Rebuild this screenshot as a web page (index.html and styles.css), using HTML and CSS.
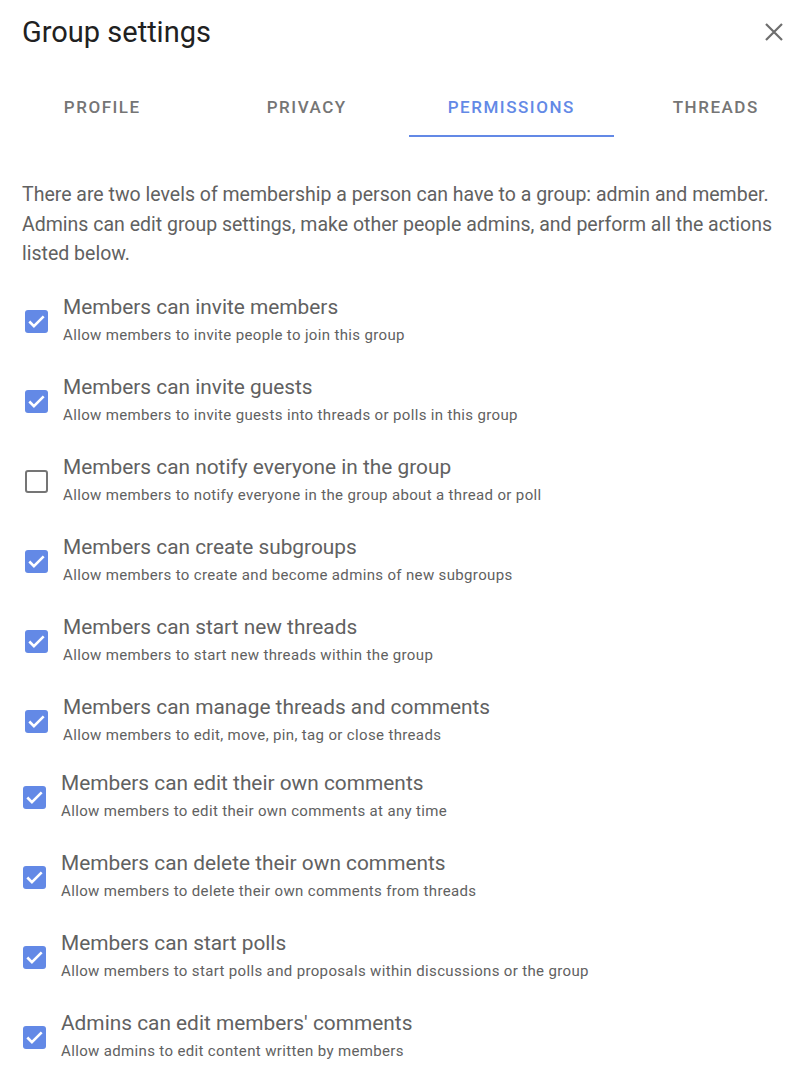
FILE: index.html
```html
<!DOCTYPE html>
<html>
<head>
<meta charset="utf-8">
<link rel="stylesheet" href="styles.css">
</head>
<body>
<div class="dialog">
  <header class="header">
    <h1 class="title">Group settings</h1>
    <button class="close" aria-label="Close">
      <svg viewBox="0 0 18 18" width="18" height="18"><path d="M1 1L17 17M17 1L1 17" stroke="#6e6e6e" stroke-width="2.2" fill="none"/></svg>
    </button>
  </header>
  <nav class="tabs">
    <div class="tab">Profile</div>
    <div class="tab">Privacy</div>
    <div class="tab active">Permissions</div>
    <div class="tab">Threads</div>
  </nav>
  <p class="intro">There are two levels of membership a person can have to a group: admin and member. Admins can edit group settings, make other people admins, and perform all the actions listed below.</p>
  <div class="list">
    <div class="row"><span class="box checked"><svg viewBox="0 0 24 24"><path d="M4.5 12L9.3 16.8L19.5 6.6" stroke="#fff" stroke-width="2.7" fill="none"/></svg></span><div class="text"><div class="label">Members can invite members</div><div class="hint">Allow members to invite people to join this group</div></div></div>
    <div class="row"><span class="box checked"><svg viewBox="0 0 24 24"><path d="M4.5 12L9.3 16.8L19.5 6.6" stroke="#fff" stroke-width="2.7" fill="none"/></svg></span><div class="text"><div class="label">Members can invite guests</div><div class="hint">Allow members to invite guests into threads or polls in this group</div></div></div>
    <div class="row"><span class="box"></span><div class="text"><div class="label">Members can notify everyone in the group</div><div class="hint">Allow members to notify everyone in the group about a thread or poll</div></div></div>
    <div class="row"><span class="box checked"><svg viewBox="0 0 24 24"><path d="M4.5 12L9.3 16.8L19.5 6.6" stroke="#fff" stroke-width="2.7" fill="none"/></svg></span><div class="text"><div class="label">Members can create subgroups</div><div class="hint">Allow members to create and become admins of new subgroups</div></div></div>
    <div class="row"><span class="box checked"><svg viewBox="0 0 24 24"><path d="M4.5 12L9.3 16.8L19.5 6.6" stroke="#fff" stroke-width="2.7" fill="none"/></svg></span><div class="text"><div class="label">Members can start new threads</div><div class="hint">Allow members to start new threads within the group</div></div></div>
    <div class="row"><span class="box checked"><svg viewBox="0 0 24 24"><path d="M4.5 12L9.3 16.8L19.5 6.6" stroke="#fff" stroke-width="2.7" fill="none"/></svg></span><div class="text"><div class="label">Members can manage threads and comments</div><div class="hint">Allow members to edit, move, pin, tag or close threads</div></div></div>
  </div>
  <div class="list list-second">
    <div class="row"><span class="box checked"><svg viewBox="0 0 24 24"><path d="M4.5 12L9.3 16.8L19.5 6.6" stroke="#fff" stroke-width="2.7" fill="none"/></svg></span><div class="text"><div class="label">Members can edit their own comments</div><div class="hint">Allow members to edit their own comments at any time</div></div></div>
    <div class="row"><span class="box checked"><svg viewBox="0 0 24 24"><path d="M4.5 12L9.3 16.8L19.5 6.6" stroke="#fff" stroke-width="2.7" fill="none"/></svg></span><div class="text"><div class="label">Members can delete their own comments</div><div class="hint">Allow members to delete their own comments from threads</div></div></div>
    <div class="row"><span class="box checked"><svg viewBox="0 0 24 24"><path d="M4.5 12L9.3 16.8L19.5 6.6" stroke="#fff" stroke-width="2.7" fill="none"/></svg></span><div class="text"><div class="label">Members can start polls</div><div class="hint">Allow members to start polls and proposals within discussions or the group</div></div></div>
    <div class="row"><span class="box checked"><svg viewBox="0 0 24 24"><path d="M4.5 12L9.3 16.8L19.5 6.6" stroke="#fff" stroke-width="2.7" fill="none"/></svg></span><div class="text"><div class="label">Admins can edit members' comments</div><div class="hint">Allow admins to edit content written by members</div></div></div>
  </div>
</div>
</body>
</html>
```

FILE: styles.css
```css
* { box-sizing: border-box; }
html, body { margin: 0; padding: 0; background: #fff; }
body {
  font-family: Roboto, "Noto Sans", sans-serif;
  color: #616161;
  overflow: hidden;
}
.dialog { width: 804px; }
.header {
  display: flex;
  align-items: center;
  justify-content: space-between;
  padding: 12px 20px 0 22px;
  height: 52px;
}
.title {
  margin: 0;
  font-size: 29px;
  font-weight: 400;
  color: #212121;
  line-height: 40px;
}
.close {
  border: 0;
  background: none;
  padding: 0;
  width: 20px;
  height: 20px;
  display: flex;
  align-items: center;
  justify-content: center;
}
.tabs {
  display: flex;
  margin-top: 37px;
  height: 48px;
  overflow: hidden;
}
.tab {
  flex: 0 0 204.5px;
  display: flex;
  align-items: center;
  justify-content: center;
  padding-bottom: 11px;
  text-transform: uppercase;
  font-size: 17px;
  font-weight: 500;
  letter-spacing: 0.09em;
  color: #757575;
  border-bottom: 2px solid transparent;
}
.tab.active {
  color: #6389e6;
  border-bottom-color: #6389e6;
}
.intro {
  margin: 43px 22px 0 22px;
  font-size: 19.5px;
  line-height: 29.5px;
  color: #616161;
}
.list { padding: 24px 0 0 25px; display: flex; flex-direction: column; gap: 28px; }
.list-second { padding: 24px 0 0 23px; }
.row { display: flex; align-items: flex-start; gap: 15px; }
.box {
  width: 23px;
  height: 23px;
  margin-top: 17px;
  border-radius: 3px;
  border: 2.5px solid #757575;
  flex: 0 0 auto;
  display: flex;
}
.box.checked { background: #6389e6; border: 0; }
.box svg { width: 23px; height: 23px; }
.label { font-size: 20.85px; line-height: 28px; color: #616161; }
.hint { font-size: 15px; line-height: 20px; letter-spacing: 0.35px; color: #616161; margin-top: 4px; }
```
